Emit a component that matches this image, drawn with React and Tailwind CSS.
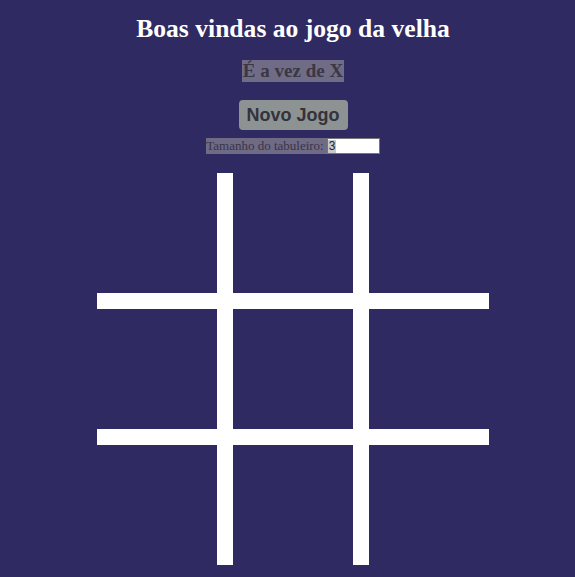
import React from "react";

export default function App() {
  const cells = Array.from({ length: 9 });
  return (
    <div className="min-h-[577px] w-full bg-[#302a62] flex flex-col items-center pl-[11px]" style={{ fontFamily: '"Liberation Serif", serif' }}>
      <h1 className="mt-[14px] text-[25.6px] leading-[29px] font-bold text-white" style={{ fontFamily: '"Liberation Serif", serif' }}>
        Boas vindas ao jogo da velha
      </h1>
      <h2 className="mt-[17px] bg-[#716c86] px-[1px] text-[19px] leading-[22px] font-bold text-[#3b3744]">
        É a vez de X
      </h2>
      <button
        className="mt-[18px] h-[30px] px-[8px] rounded-[4px] bg-[#8c9392] text-[18px] font-bold text-[#34323c]"
        style={{ fontFamily: '"Liberation Sans", Arial, sans-serif' }}
      >
        Novo Jogo
      </button>
      <div className="mt-[8px] flex items-center h-[16px]">
        <span className="bg-[#6f6b85] text-[13px] leading-[16px] text-[#38344a] pr-[3px]">Tamanho do tabuleiro:</span>
        <div className="w-[53px] h-[16px] bg-white border border-[#767676] flex items-center">
          <span className="bg-[#c8c8c8] text-[12px] leading-[13px] text-[#222] px-[1px]" style={{ fontFamily: '"Liberation Sans", Arial, sans-serif' }}>3</span>
        </div>
      </div>
      <div className="mt-[19px] grid grid-cols-[120px_120px_120px] grid-rows-[120px_120px_120px] gap-[16px] bg-white">
        {cells.map((_, i) => (
          <div key={i} className="bg-[#302a62]" />
        ))}
      </div>
    </div>
  );
}
